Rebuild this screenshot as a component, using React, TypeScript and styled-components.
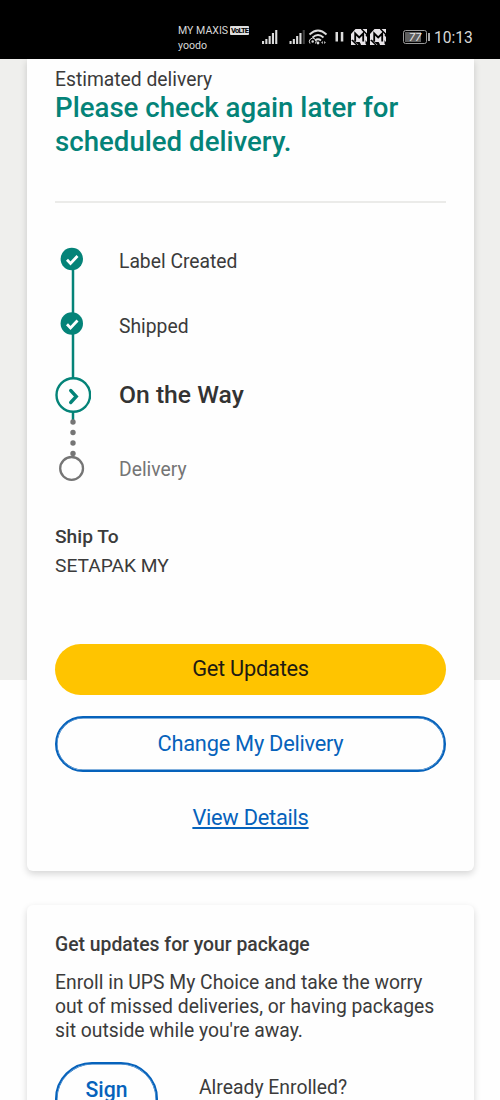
import React from "react";
import styled, { createGlobalStyle } from "styled-components";

const teal = "#048378";
const blue = "#0662bb";

const GlobalStyle = createGlobalStyle`
  *, *::before, *::after { box-sizing: border-box; }
  html, body { margin: 0; padding: 0; overflow: hidden; }
  body { font-family: Roboto, "Liberation Sans", sans-serif; color: #3b3b3b; background: #fefefe; }
`;

const Screen = styled.div`
  width: 500px;
  height: 1100px;
  overflow: hidden;
  background: linear-gradient(#efefed 680px, #fefefe 680px);
`;

const StatusBar = styled.header`
  position: relative;
  z-index: 1;
  display: flex;
  height: 58.5px;
  padding-left: 178px;
  background: #000;
  color: #d8d8d8;
`;

const Carrier = styled.div`
  width: 83px;
  padding-top: 23px;
  font-size: 10.6px;
  line-height: 15px;
  white-space: nowrap;
`;

const CarrierRow = styled.div`
  display: flex;
  align-items: center;
  gap: 2px;
`;

const VolteBadge = styled.span`
  display: flex;
  justify-content: center;
  width: 19px;
  height: 9px;
  border-radius: 1px;
  background: #dedede;
  color: #000;
  font-size: 7.6px;
  font-weight: 700;
  line-height: 9.5px;
  letter-spacing: -0.8px;
`;

const StatusIcons = styled.svg`
  display: block;
  flex: none;
  width: 130px;
  height: 58px;
`;

const Battery = styled.div`
  position: relative;
  flex: none;
  width: 24px;
  height: 14px;
  margin: 30px 0 0 12px;
  border: 1px solid #9a9a9a;
  border-radius: 2.5px;
  background: linear-gradient(90deg, #5e5e5e 17px, #000 17px);
  box-shadow: inset 0 0 0 1px #000;
  color: #e4e4e4;
  font-size: 11.5px;
  font-style: italic;
  line-height: 13px;
  text-align: center;

  &::after {
    content: "";
    position: absolute;
    left: 24px;
    top: 2px;
    width: 2px;
    height: 8px;
    background: #a8a8a8;
  }
`;

const Clock = styled.time`
  padding: 29px 0 0 7px;
  font-size: 15.6px;
  line-height: 19px;
`;

const Card = styled.section<{ $first?: boolean }>`
  width: 447px;
  height: ${(p) => (p.$first ? "812.5px" : "300px")};
  margin: ${(p) => (p.$first ? "0 0 34px 27px" : "0 0 0 27px")};
  padding: ${(p) => (p.$first ? "8.5px 28px 0" : "28px 28px 0")};
  border-radius: ${(p) => (p.$first ? "0 0 6px 6px" : "6px")};
  background: #fefefe;
  box-shadow: 0 3px 7px rgba(0, 0, 0, 0.16);
`;

const Eyebrow = styled.div`
  padding-top: 1px;
  font-size: 19.3px;
  line-height: 23px;
`;

const Headline = styled.h1`
  margin: 0;
  color: ${teal};
  font-size: 27.65px;
  font-weight: 500;
  line-height: 34px;
  white-space: nowrap;
`;

const Divider = styled.hr`
  height: 2px;
  margin: 42px 0 44px;
  border: 0;
  background: #ebebe9;
`;

const Progress = styled.div`
  display: flex;
  gap: 28px;
`;

const Rail = styled.svg`
  display: block;
  width: 36px;
  height: 236px;
`;

const Steps = styled.ol`
  margin: 0;
  padding: 0;
  list-style: none;
`;

const Step = styled.li<{ $gap?: number; $state?: "current" | "pending" }>`
  margin-top: ${(p) => p.$gap ?? 0}px;
  color: ${(p) => (p.$state === "pending" ? "#757575" : p.$state === "current" ? "#333" : "#3b3b3b")};
  font-size: ${(p) => (p.$state === "current" ? 24.7 : 19.3)}px;
  font-weight: ${(p) => (p.$state === "current" ? 500 : 400)};
  line-height: 28px;
`;

const Address = styled.div`
  margin-top: 37.5px;
  font-size: 19.2px;
  line-height: 29px;
`;

const Strong = styled.div`
  font-weight: 500;
`;

const PillButton = styled.button<{ $primary?: boolean }>`
  display: block;
  width: 100%;
  height: ${(p) => (p.$primary ? 51 : 56)}px;
  margin: ${(p) => (p.$primary ? 64.5 : 21)}px 0 0;
  padding: ${(p) => (p.$primary ? "0 0 2px" : "0")};
  border: ${(p) => (p.$primary ? "0 solid" : `2px solid ${blue}`)};
  box-shadow: ${(p) => (p.$primary ? "none" : `inset 0 0 0 0.5px ${blue}`)};
  border-radius: 28px;
  background: ${(p) => (p.$primary ? "#ffc400" : "#fefefe")};
  color: ${(p) => (p.$primary ? "#1e1b12" : blue)};
  font: 400 21.8px/26px Roboto, sans-serif;
  letter-spacing: -0.25px;
`;

const DetailsLink = styled.a`
  display: block;
  margin-top: 32px;
  color: ${blue};
  font-size: 21.8px;
  letter-spacing: -0.25px;
  line-height: 28px;
  text-align: center;
  text-decoration: underline;
`;

const CardTitle = styled.h2`
  margin: 0 0 13.5px;
  font-size: 19.35px;
  font-weight: 500;
  line-height: 24px;
`;

const Copy = styled.p`
  margin: 0;
  font-size: 19.32px;
  line-height: 24px;
  white-space: nowrap;
`;

const EnrollRow = styled.div`
  display: flex;
  gap: 41px;
  margin-top: 19.5px;
`;

const SignButton = styled.button`
  width: 103px;
  height: 84px;
  padding: 0 24px;
  border: 2px solid ${blue};
  box-shadow: inset 0 0 0 0.5px ${blue};
  border-radius: 37px;
  background: #fefefe;
  color: ${blue};
  font: 500 21.2px/28px Roboto, sans-serif;
`;

const Enrolled = styled.div`
  padding-top: 13px;
  font-size: 19.35px;
  line-height: 26px;
`;

const Signal = ({ x, dimLast }: { x: number; dimLast?: boolean }) => (
  <g fill="#dcdcdc">
    {[3, 5, 8, 11, 14].map((h, i) => (
      <rect key={h} x={x + i * 3.3} y={44 - h} width="2.1" height={h} opacity={dimLast && i === 4 ? 0.3 : 1} />
    ))}
  </g>
);

const MaxisMark = ({ x }: { x: number }) => (
  <g transform={`translate(${x} 29)`}>
    <path d="M4.5 0H16V4.5L14.5 6V16H11.5L8.5 13H5L3.5 11.5H0V5Z" fill="#e8e4e8" />
    <path d="M0 11.5H3L7.5 16H0ZM9 13H12L15.5 16H10ZM14 6L16 8V13L14 11Z" fill="#e8e4e8" />
    <path d="M4.2 12.5V4.5L8.2 8.5L12.2 4.5V12.5" fill="none" stroke="#000" strokeWidth="1.8" />
    <path d="M1 11L6 16M10.5 0L16 5.5" fill="none" stroke="#000" strokeWidth="1.5" />
  </g>
);

const Check = ({ y }: { y: number }) => (
  <g>
    <circle cx="16.8" cy={y} r="11.2" fill={teal} />
    <path d={`M12 ${y + 0.8}l3.5 3.6 7-7.4`} fill="none" stroke="#fff" strokeWidth="2.8" />
  </g>
);

export default function App() {
  return (
    <Screen>
      <GlobalStyle />
      <StatusBar>
        <Carrier>
          <CarrierRow>
            <span>MY MAXIS</span>
            <VolteBadge>VoLTE</VolteBadge>
          </CarrierRow>
          <div>yoodo</div>
        </Carrier>
        <StatusIcons viewBox="0 0 130 58">
          <Signal x={1} />
          <Signal x={28.5} dimLast />
          <g fill="none" stroke="#dcdcdc" strokeWidth="1.8">
            <path d="M48.5 34.5Q57 26.5 65.5 34.5" />
            <path d="M51.5 37.5Q57 32.5 62.5 37.5" />
            <path d="M54 40.5Q57 38 60 40.5" />
            <path d="M49 43.5a3.4 3.4 0 1 1 5.5 0" strokeWidth="1" />
          </g>
          <circle cx="51.7" cy="41.5" r="1.2" fill="#dcdcdc" />
          <circle cx="57" cy="43" r="1.4" fill="#dcdcdc" />
          <path d="M60 42.5l2-1.5v3zM65 42.5l-2-1.5v3z" fill="#aaa" />
          <path d="M74.5 32H77V41.5H74.5zM79.8 32h2.5v9.5h-2.5z" fill="#dcdcdc" />
          <MaxisMark x={90} />
          <MaxisMark x={109} />
        </StatusIcons>
        <Battery>77</Battery>
        <Clock>10:13</Clock>
      </StatusBar>

      <Card $first>
        <Eyebrow>Estimated delivery</Eyebrow>
        <Headline>
          Please check again later for
          <br />
          scheduled delivery.
        </Headline>
        <Divider />
        <Progress>
          <Rail viewBox="0 0 36 236">
            <path d="M18 12V173" stroke={teal} strokeWidth="2.5" />
            <Check y={12} />
            <Check y={76.5} />
            <circle cx="18.3" cy="148" r="16.8" fill="#fefefe" stroke={teal} strokeWidth="2.4" />
            <path d="M15.7 143.5l5.6 6-5.6 6" fill="none" stroke={teal} strokeWidth="3.3" strokeLinecap="round" />
            <g fill="#757575">
              <circle cx="18" cy="175" r="2.7" />
              <circle cx="18" cy="185.5" r="2.7" />
              <circle cx="18" cy="196" r="2.7" />
              <circle cx="18" cy="206.5" r="2.7" />
            </g>
            <circle cx="16.6" cy="221.4" r="11.4" fill="#fefefe" stroke="#757575" strokeWidth="2.3" />
          </Rail>
          <Steps>
            <Step $gap={1}>Label Created</Step>
            <Step $gap={37}>Shipped</Step>
            <Step $gap={40} $state="current">On the Way</Step>
            <Step $gap={47} $state="pending">Delivery</Step>
          </Steps>
        </Progress>
        <Address>
          <Strong>Ship To</Strong>
          <div>SETAPAK MY</div>
        </Address>
        <PillButton $primary>Get Updates</PillButton>
        <PillButton>Change My Delivery</PillButton>
        <DetailsLink>View Details</DetailsLink>
      </Card>

      <Card>
        <CardTitle>Get updates for your package</CardTitle>
        <Copy>
          Enroll in UPS My Choice and take the worry
          <br />
          out of missed deliveries, or having packages
          <br />
          sit outside while you're away.
        </Copy>
        <EnrollRow>
          <SignButton>Sign Up</SignButton>
          <Enrolled>Already Enrolled?</Enrolled>
        </EnrollRow>
      </Card>
    </Screen>
  );
}
